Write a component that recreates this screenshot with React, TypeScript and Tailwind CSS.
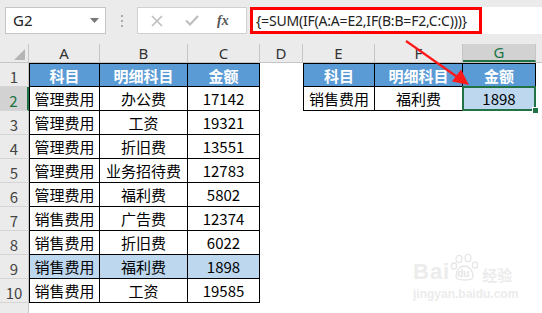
import React from 'react';

const CJK = "font-[family-name:'Noto_Sans_CJK_SC','Noto_Sans',sans-serif]";
const W = ['w-[71px]', 'w-[88px]', 'w-[72px]', 'w-[43px]', 'w-[72px]', 'w-[88px]', 'w-[73px]'];
const LETTERS = ['A', 'B', 'C', 'D', 'E', 'F', 'G'];

const DATA: string[][] = [
  ['管理费用', '办公费', '17142'],
  ['管理费用', '工资', '19321'],
  ['管理费用', '折旧费', '13551'],
  ['管理费用', '业务招待费', '12783'],
  ['管理费用', '福利费', '5802'],
  ['销售费用', '广告费', '12374'],
  ['销售费用', '折旧费', '6022'],
  ['销售费用', '福利费', '1898'],
  ['销售费用', '工资', '19585'],
];

function Cell({ w, cls, children }: { w: string; cls: string; children?: React.ReactNode }) {
  return (
    <div className={`${w} shrink-0 h-full flex items-center justify-center text-[15px] leading-none ${cls}`}>
      {children}
    </div>
  );
}

function RowHead({ n, active }: { n: number; active?: boolean }) {
  return (
    <div
      className={`w-[29px] shrink-0 h-full flex items-end justify-center pb-[2px] text-[15px] leading-none border-b border-[#d5d5d5] ${
        active
          ? 'bg-[#d2d2d2] text-[#217346] border-r-2 border-r-[#217346]'
          : 'bg-[#ebebeb] text-[#444] border-r border-r-[#c6c6c6]'
      }`}
    >
      {n}
    </div>
  );
}

function tableCls(row: number, first: boolean, fill: string) {
  let c = 'border-r border-b border-black ';
  if (first) c += 'border-l ';
  if (row === 1) c += 'border-t ';
  c += fill;
  return c;
}

export default function App() {
  const rows: React.ReactNode[] = [];
  for (let r = 1; r <= 10; r++) {
    let abc: string[];
    let fill = 'bg-white text-black';
    if (r === 1) {
      abc = ['科目', '明细科目', '金额'];
      fill = 'bg-[#5b9bd5] text-white font-bold';
    } else {
      abc = DATA[r - 2];
      if (r === 9) fill = 'bg-[#bdd7ee] text-black';
    }
    rows.push(
      <div key={r} className="flex h-[24px]">
        <RowHead n={r} active={r === 2} />
        {abc.map((t, i) => (
          <Cell key={i} w={W[i]} cls={tableCls(r, i === 0, fill)}>
            {t}
          </Cell>
        ))}
        <Cell w={W[3]} cls="bg-white" />
        {r === 1 && (
          <>
            <Cell w={W[4]} cls={tableCls(1, true, 'bg-[#5b9bd5] text-white font-bold')}>科目</Cell>
            <Cell w={W[5]} cls={tableCls(1, false, 'bg-[#5b9bd5] text-white font-bold')}>明细科目</Cell>
            <Cell w={W[6]} cls={tableCls(1, false, 'bg-[#5b9bd5] text-white font-bold')}>金额</Cell>
          </>
        )}
        {r === 2 && (
          <>
            <Cell w={W[4]} cls={tableCls(2, true, 'bg-white text-black')}>销售费用</Cell>
            <Cell w={W[5]} cls={tableCls(2, false, 'bg-white text-black')}>福利费</Cell>
            <Cell w={W[6]} cls={tableCls(2, false, 'bg-[#bdd7ee] text-black relative')}>
              1898
              <div className="absolute -left-[1px] -top-[1px] right-[-1px] bottom-[-1px] border-2 border-[#217346]" />
              <div className="absolute right-[-4px] bottom-[-4px] w-[7px] h-[7px] bg-[#217346] border border-white" />
            </Cell>
          </>
        )}
        {r > 2 && (
          <>
            <Cell w={W[4]} cls="bg-white" />
            <Cell w={W[5]} cls="bg-white" />
            <Cell w={W[6]} cls="bg-white" />
          </>
        )}
        <div className="flex-1 bg-white" />
      </div>
    );
  }

  return (
    <div className={`relative w-[542px] h-[313px] overflow-hidden bg-white ${CJK}`}>
      {/* formula bar */}
      <div className="h-[44px] bg-[#ebebeb] pt-[7px]">
        <div className="flex h-[27px]">
          <div className="ml-[5px] w-[101px] h-full bg-white border border-[#c6c6c6] flex items-center justify-between pl-[7px] pr-[6px]">
            <span className="text-[15px] text-[#222] font-[family-name:'Noto_Sans',sans-serif]">G2</span>
            <svg width="9" height="5" viewBox="0 0 9 5">
              <path d="M0 0 L9 0 L4.5 5 Z" fill="#777" />
            </svg>
          </div>
          <div className="w-[31px] h-full flex flex-col items-center justify-center gap-[3px]">
            <div className="w-[2px] h-[2px] bg-[#aaa]" />
            <div className="w-[2px] h-[2px] bg-[#aaa]" />
            <div className="w-[2px] h-[2px] bg-[#aaa]" />
          </div>
          <div className="w-[110px] h-full bg-white border border-[#d0d0d0] flex items-center">
            <svg className="ml-[13px]" width="12" height="12" viewBox="0 0 12 12">
              <path d="M1 1 L11 11 M11 1 L1 11" stroke="#bdbdbd" strokeWidth="1.6" />
            </svg>
            <svg className="ml-[22px]" width="14" height="11" viewBox="0 0 14 11">
              <path d="M1 5.5 L5 9.5 L13 1" stroke="#bdbdbd" strokeWidth="2" fill="none" />
            </svg>
            <span className="ml-[18px] text-[14px] italic font-bold text-[#555] font-[family-name:'Liberation_Serif',serif]">
              fx
            </span>
          </div>
          <div className="ml-[3px] flex-1 h-full bg-white">
            <div className="w-[232px] h-full border-[3px] border-[#ff0000] flex items-center pl-[3px]">
              <span className="text-[14px] text-[#222] font-[family-name:'Noto_Sans',sans-serif] tracking-[-0.2px]">
                {'{=SUM(IF(A:A=E2,IF(B:B=F2,C:C)))}'}
              </span>
            </div>
          </div>
        </div>
      </div>

      {/* column header */}
      <div className="flex h-[19px] bg-[#ebebeb] border-b border-[#c6c6c6]">
        <div className="w-[29px] shrink-0 h-full border-r border-[#c6c6c6] relative">
          <svg className="absolute right-[3px] bottom-[2px]" width="11" height="11" viewBox="0 0 11 11">
            <path d="M11 0 L11 11 L0 11 Z" fill="#b5b5b5" />
          </svg>
        </div>
        {LETTERS.map((l, i) => (
          <div
            key={l}
            className={`${W[i]} shrink-0 h-full flex items-center justify-center text-[15px] leading-none border-r border-[#c6c6c6] font-[family-name:'Noto_Sans',sans-serif] ${
              l === 'G' ? 'bg-[#d2d2d2] text-[#217346] border-b-2 border-b-[#217346]' : 'text-[#333]'
            }`}
          >
            {l}
          </div>
        ))}
        <div className="flex-1" />
      </div>

      {rows}

      <div className="flex h-[12px]">
        <div className="w-[29px] shrink-0 h-full bg-[#ebebeb] border-r border-[#c6c6c6]" />
        <div className="flex-1 bg-white" />
      </div>

      {/* red arrow annotation */}
      <svg className="absolute left-0 top-0 pointer-events-none" width="542" height="313" viewBox="0 0 542 313">
        <line x1="406" y1="41" x2="458" y2="77.5" stroke="#ff1a1a" strokeWidth="2.2" />
        <path d="M469 85 L452 81.5 L461 69.5 Z" fill="#ff1a1a" />
      </svg>

      {/* watermark */}
      <div className="absolute left-[413px] top-[250px] pointer-events-none flex flex-col items-start">
        <div className="flex items-end h-[33px] leading-none">
          <span className="text-[22px] leading-none font-bold text-[#ececec] font-[family-name:'Liberation_Sans',sans-serif] tracking-[1px]">Bai</span>
          <div className="relative w-[30px] h-[30px]">
            <svg width="30" height="30" viewBox="0 0 30 30" className="absolute left-0 top-0">
              <g fill="none" stroke="#e6e6e6" strokeWidth="1.3">
                <ellipse cx="9" cy="6" rx="3" ry="3.6" />
                <ellipse cx="18" cy="5" rx="3" ry="3.6" />
                <ellipse cx="4" cy="13" rx="2.6" ry="3.2" />
                <ellipse cx="25" cy="12" rx="2.6" ry="3.2" />
                <path d="M6 24 C6 17 10 13 14 13 C19 13 23 17 23 24 C23 28 6 28 6 24 Z" />
              </g>
            </svg>
            <span className="absolute left-[7px] top-[16px] text-[10px] leading-none font-bold text-[#e6e6e6] font-[family-name:'Liberation_Sans',sans-serif]">du</span>
          </div>
          <span className="ml-[2px] mb-[1px] text-[15px] leading-none font-bold text-[#ececec]">经验</span>
        </div>
        <span className="mt-[5px] text-[12px] leading-none text-[#ececec] font-[family-name:'Liberation_Sans',sans-serif] font-bold">
          jingyan.baidu.com
        </span>
      </div>
    </div>
  );
}
